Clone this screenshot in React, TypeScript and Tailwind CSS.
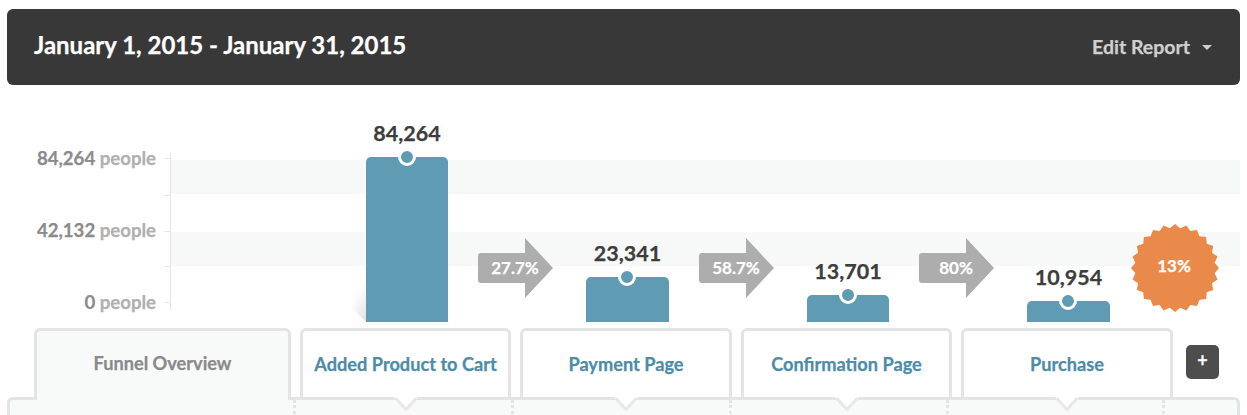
const font = "font-['Lato','Liberation_Sans',sans-serif]";
const heavy = "font-bold [-webkit-text-stroke:0.25px_currentColor]";

function Bar({ value, height, width }: { value: string; height: number; width: string }) {
  return (
    <div className={`relative z-10 flex shrink-0 flex-col items-center ${width}`}>
      <div className={`mb-[12px] h-[24px] whitespace-nowrap text-[21.5px] leading-[24px] text-[#3d3d3d] ${heavy}`}>{value}</div>
      <div className="relative w-full rounded-t-[5px] bg-[#5f9bb2]" style={{ height }}>
        <span className="absolute top-[-9px] left-[32px] h-[18px] w-[18px] rounded-full border-[3px] border-white bg-[#5f9bb2]" />
      </div>
    </div>
  );
}

function Arrow({ label }: { label: string }) {
  return (
    <div className="relative z-10 mr-[32px] mb-[24px] ml-[30px] h-[60px] w-[76px] shrink-0">
      <svg width="76" height="60" viewBox="0 0 76 60" className="block">
        <path d="M3 15H47V0L75 30L47 60V45H3A3 3 0 0 1 0 42V18A3 3 0 0 1 3 15Z" fill="#adadad" />
      </svg>
      <span className={`absolute inset-y-0 left-0 flex w-[74px] items-center justify-center text-[17px] text-white ${heavy}`}>{label}</span>
    </div>
  );
}

function Burst() {
  const teeth = 24;
  const pts: string[] = [];
  for (let i = 0; i < teeth * 2; i++) {
    const r = i % 2 === 0 ? 44 : 40;
    const a = (Math.PI * i) / teeth - Math.PI / 2;
    pts.push(`${(44 + r * Math.cos(a)).toFixed(2)},${(44 + r * Math.sin(a)).toFixed(2)}`);
  }
  return (
    <div className="relative z-10 mb-[10px] ml-[21px] h-[88px] w-[88px] shrink-0">
      <svg width="88" height="88" viewBox="0 0 88 88" className="block">
        <polygon points={pts.join(" ")} fill="#e9894a" />
      </svg>
      <span className={`absolute inset-0 flex items-center justify-center pr-[2px] pb-[4px] text-[17px] text-white ${heavy}`}>13%</span>
    </div>
  );
}

function Tab({ label, width }: { label: string; width: string }) {
  return (
    <div className={`relative z-10 flex h-[69px] shrink-0 items-center justify-center rounded-t-[6px] border-[3px] border-b-0 border-[#e4e4e4] bg-white pt-[1px] text-[18.2px] text-[#4d8ca7] ${heavy} ${width}`}>
      {label}
      <svg width="24" height="15" viewBox="0 0 24 15" className="absolute top-full left-1/2 -translate-x-1/2">
        <path d="M0 0H24L12 13Z" fill="#ffffff" />
        <path d="M1.5 1L12 12.5L22.5 1" fill="none" stroke="#e8e8e8" strokeWidth="3" />
      </svg>
    </div>
  );
}

export default function App() {
  return (
    <div className={`h-[415px] w-[1247px] overflow-hidden bg-white px-[7px] pt-[9px] ${font}`}>
      <header className="flex h-[76px] items-center justify-between rounded-[6px] bg-[#383838] pr-[28px] pl-[27px]">
        <h1 className={`pb-[5px] text-[24px] text-white ${heavy}`}>January 1, 2015 - January 31, 2015</h1>
        <div className={`flex items-center gap-[12px] text-[19.5px] text-[#cfcfcf] ${heavy}`}>
          Edit Report
          <svg width="10" height="5" viewBox="0 0 10 5"><path d="M0 0H10L5 5Z" fill="#cfcfcf" /></svg>
        </div>
      </header>

      <section className="relative flex h-[237px] items-end">
        <div className="absolute top-[75px] right-0 left-[164px] h-[34px] bg-[#f7f8f8]" />
        <div className="absolute top-[147px] right-0 left-[164px] h-[34px] bg-[#f7f8f8]" />

        <div className={`mb-[10px] flex h-[164px] w-[149px] shrink-0 flex-col justify-between text-right text-[18.6px] leading-[20px] ${heavy}`}>
          {["84,264", "42,132", "0"].map((n) => (
            <div key={n} className="text-[#8b8b8b]">
              {n} <span className="text-[#b0b0b0]">people</span>
            </div>
          ))}
        </div>
        <svg width="7" height="157" viewBox="0 0 7 157" className="relative z-10 mb-[12px] ml-[8px] shrink-0">
          <path d="M6.5 0V157M0 5.5H6M0 42.5H6M0 78.5H6M0 113.5H6M0 149.5H6" stroke="#e6e6e6" strokeWidth="1" fill="none" />
        </svg>

        <div className="relative ml-[195px] flex items-end">
          <svg width="24" height="44" viewBox="0 0 24 44" className="absolute bottom-0 left-[-24px]">
            <defs>
              <linearGradient id="shade" x1="0.3" y1="0.2" x2="1" y2="0.95">
                <stop offset="0.3" stopColor="#ffffff" />
                <stop offset="1" stopColor="#e2e2e2" />
              </linearGradient>
            </defs>
            <path d="M24 0L1 21L24 44Z" fill="url(#shade)" />
          </svg>
          <Bar value="84,264" height={165} width="w-[82px]" />
          <Arrow label="27.7%" />
          <Bar value="23,341" height={45} width="w-[83px]" />
          <Arrow label="58.7%" />
          <Bar value="13,701" height={27} width="w-[82px]" />
          <Arrow label="80%" />
          <Bar value="10,954" height={21} width="w-[83px]" />
          <Burst />
        </div>
      </section>

      <nav className="mt-[6px] flex pl-[27px]">
        <div className={`relative z-10 mr-[9px] -mb-[3px] flex h-[72px] w-[257px] shrink-0 items-center justify-center rounded-t-[6px] border-[3px] border-b-0 border-[#e4e4e4] bg-[#f8f9f9] pb-[3px] text-[18.2px] text-[#8a8a8a] ${heavy}`}>
          Funnel Overview
        </div>
        <div className="flex gap-[9px]">
          <Tab label="Added Product to Cart" width="w-[211px]" />
          <Tab label="Payment Page" width="w-[212px]" />
          <Tab label="Confirmation Page" width="w-[211px]" />
          <Tab label="Purchase" width="w-[212px]" />
        </div>
        <button className={`mt-[17px] ml-[13px] flex h-[34px] w-[33px] items-center justify-center rounded-[5px] bg-[#4d4d4d] pb-[3px] text-[18px] text-white ${heavy}`}>+</button>
      </nav>

      <div className="relative h-[40px] rounded-t-[6px] border-[3px] border-b-0 border-[#e4e4e4] bg-[#f8f9f9]">
        <span className="absolute top-0 bottom-0 left-[283px] border-l-[3px] border-dotted border-[#e4e4e4]" />
        <span className="absolute top-0 bottom-0 left-[501px] border-l-[3px] border-dotted border-[#e4e4e4]" />
        <span className="absolute top-0 bottom-0 left-[719px] border-l-[3px] border-dotted border-[#e4e4e4]" />
        <span className="absolute top-0 bottom-0 left-[936px] border-l-[3px] border-dotted border-[#e4e4e4]" />
        <span className="absolute top-0 bottom-0 left-[1152px] border-l-[3px] border-dotted border-[#e4e4e4]" />
      </div>
    </div>
  );
}
